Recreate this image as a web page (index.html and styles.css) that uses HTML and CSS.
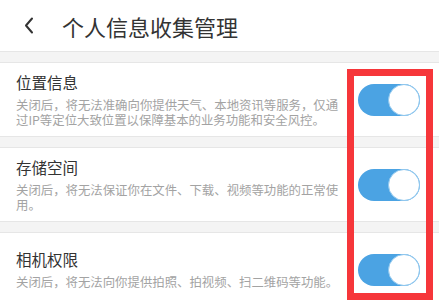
FILE: index.html
```html
<!DOCTYPE html>
<html lang="zh-CN">
<head>
    <meta charset="UTF-8">
    <title>个人信息收集管理</title>
    <link rel="stylesheet" href="styles.css">
</head>
<body>

    <header class="topbar">
        <svg class="back" width="10" height="17" viewBox="0 0 10 17">
            <path d="M8 1.5 L2 8.5 L8 15.5" fill="none" stroke="#333" stroke-width="2" stroke-linecap="round" stroke-linejoin="round"/>
        </svg>
        <h1>个人信息收集管理</h1>
    </header>

    <main class="list">
        <div class="gap"></div>

        <section class="item">
            <div class="text">
                <h2>位置信息</h2>
                <p>关闭后，将无法准确向你提供天气、本地资讯等服务，仅通过IP等定位大致位置以保障基本的业务功能和安全风控。</p>
            </div>
            <span class="switch on"><span class="knob"></span></span>
        </section>

        <div class="gap"></div>

        <section class="item">
            <div class="text">
                <h2>存储空间</h2>
                <p>关闭后，将无法保证你在文件、下载、视频等功能的正常使用。</p>
            </div>
            <span class="switch on"><span class="knob"></span></span>
        </section>

        <div class="gap"></div>

        <section class="item">
            <div class="text">
                <h2>相机权限</h2>
                <p>关闭后，将无法向你提供拍照、拍视频、扫二维码等功能。</p>
            </div>
            <span class="switch on"><span class="knob"></span></span>
        </section>
    </main>

    <!-- markering rundt om knapperne -->
    <div class="highlight"></div>

</body>
</html>
```

FILE: styles.css
```css
body {
    margin: 0;
    background-color: #fff;
    font-family: "Noto Sans CJK SC", "Noto Sans", sans-serif;
    overflow: hidden;
}

.topbar {
    height: 51px;
    display: flex;
    align-items: center;
    padding-left: 24px;
    background-color: #fff;
}

.topbar .back {
    display: block;
    margin-right: 28px;
}

.topbar h1 {
    margin: 0;
    font-size: 22px;
    font-weight: 400;
    color: #333;
    line-height: 1;
}

.gap {
    height: 10px;
    background-color: #f4f4f4;
    border-top: 1px solid #e6e6e6;
    border-bottom: 1px solid #e6e6e6;
}

.item {
    min-height: 73px;
    display: flex;
    align-items: center;
    justify-content: space-between;
    padding: 0 19px 0 16px;
}

.text {
    width: 326px;
}

.text h2 {
    margin: 0 0 6px 0;
    font-size: 15.5px;
    font-weight: 400;
    line-height: 20px;
    color: #333;
}

.text p {
    margin: 0;
    font-size: 12.4px;
    line-height: 15px;
    color: #a3a3a3;
}

.switch {
    position: relative;
    display: block;
    width: 62px;
    height: 32px;
    border-radius: 16px;
    background-color: #4ba3e3;
}

.switch .knob {
    position: absolute;
    right: 0;
    top: 0;
    width: 32px;
    height: 32px;
    box-sizing: border-box;
    border-radius: 50%;
    background-color: #fff;
    border: 1.5px solid #8fc7ee;
}

.highlight {
    position: absolute;
    left: 347px;
    top: 69px;
    width: 86px;
    height: 231px;
    box-sizing: border-box;
    border: 7px solid #f6363a;
}
```
